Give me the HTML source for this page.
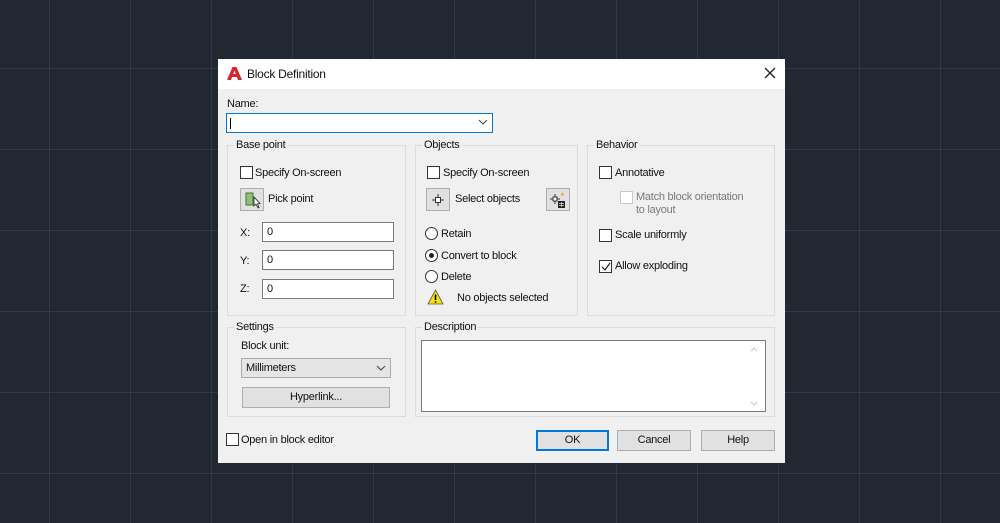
<!DOCTYPE html>
<html><head><meta charset="utf-8"><style>
*{margin:0;padding:0;box-sizing:border-box}
body{width:1000px;height:523px;overflow:hidden;background:#222831;font-family:"Liberation Sans",sans-serif;font-size:11px;letter-spacing:-0.25px;color:#111;position:relative}
.grid{position:absolute;inset:0;background-image:
linear-gradient(to right,rgba(60,68,80,.6) 1px,transparent 1px),
linear-gradient(to bottom,rgba(60,68,80,.6) 1px,transparent 1px);
background-size:81px 81px,81px 81px;background-position:49px 68px,49px 68px}
.dlg{position:absolute;left:218px;top:59px;width:567px;height:404px;background:#f0f0f0}
.title{position:absolute;left:0;top:0;width:567px;height:30px;background:#fff}
.a{position:absolute}
.t{position:absolute;white-space:nowrap;line-height:12px}
.grp{position:absolute;border:1px solid #dcdcdc}
.gl{position:absolute;background:#f0f0f0;padding:0 2px;top:-7px;left:6px;line-height:12px}
.cb{position:absolute;width:13px;height:13px;border:1px solid #333;background:#fff}
.rb{position:absolute;width:13px;height:13px;border:1px solid #333;border-radius:50%;background:#fff}
.inp{position:absolute;background:#fff;border:1px solid #7a7a7a;padding-left:4px;line-height:18px}
.btn{position:absolute;background:#e1e1e1;border:1px solid #adadad;text-align:center;line-height:18px}
</style></head><body>
<div class="grid"></div>
<div class="dlg">
<div class="title">
<svg class="a" style="left:9px;top:7px" width="15" height="15" viewBox="0 0 15 15"><path d="M0 14 L5.5 1 H9.5 L15 14 H11 L9.8 11 H5 L6.2 8 H8.7 L7.5 4.5 L4 14Z" fill="#d8262d"/></svg>
<div class="t" style="left:29px;top:9px;font-size:12px">Block Definition</div>
<svg class="a" style="left:546px;top:8px" width="12" height="12" viewBox="0 0 12 12"><path d="M1 1L11 11M11 1L1 11" stroke="#222" stroke-width="1.3"/></svg>
</div>
<div class="t" style="left:9px;top:39px">Name:</div>
<div class="inp" style="left:8px;top:54px;width:267px;height:20px;border-color:#0078d7"><div class="a" style="left:3px;top:4px;width:1px;height:11px;background:#000"></div></div>
<svg class="a" style="left:260px;top:60px" width="10" height="6"><path d="M1 1L5 5L9 1" stroke="#444" fill="none"/></svg>

<div class="grp" style="left:9px;top:86px;width:179px;height:171px"><div class="gl">Base point</div></div>
<div class="cb" style="left:22px;top:107px"></div><div class="t" style="left:37px;top:108px">Specify On-screen</div>
<div class="btn" style="left:22px;top:129px;width:24px;height:23px"></div>
<svg class="a" style="left:26px;top:132px" width="18" height="18"><rect x="2" y="2" width="7" height="12" fill="#8fc078" stroke="#3a7a2a"/><path d="M10 6 L10 15 L12 13 L14 17 L15 16.5 L13.5 12.8 L16 12.5Z" fill="#fff" stroke="#222" stroke-width=".8"/></svg>
<div class="t" style="left:50px;top:134px">Pick point</div>
<div class="t" style="left:22px;top:168px">X:</div><div class="inp" style="left:44px;top:163px;width:132px;height:20px">0</div>
<div class="t" style="left:22px;top:196px">Y:</div><div class="inp" style="left:44px;top:191px;width:132px;height:20px">0</div>
<div class="t" style="left:22px;top:224px">Z:</div><div class="inp" style="left:44px;top:220px;width:132px;height:20px">0</div>

<div class="grp" style="left:197px;top:86px;width:163px;height:171px"><div class="gl">Objects</div></div>
<div class="cb" style="left:209px;top:107px"></div><div class="t" style="left:225px;top:108px">Specify On-screen</div>
<div class="btn" style="left:208px;top:129px;width:24px;height:23px"></div>
<svg class="a" style="left:212px;top:133px" width="16" height="16"><path d="M8 2V14M2 8H14" stroke="#333"/><rect x="5.5" y="5.5" width="5" height="5" fill="#fff" stroke="#333"/></svg>
<div class="t" style="left:237px;top:134px">Select objects</div>
<div class="btn" style="left:328px;top:129px;width:24px;height:23px"></div>
<svg class="a" style="left:331px;top:132px" width="18" height="18"><path d="M6 3V13M1 8H11" stroke="#333"/><rect x="4" y="6" width="4" height="4" fill="#fff" stroke="#333"/><path d="M13 1L12 5L15 4Z" fill="#e0a020"/><rect x="9" y="10" width="7" height="7" fill="#222"/><path d="M10 12.5H15M10 14.5H15M12.5 11V16" stroke="#ddd" stroke-width=".7"/></svg>
<div class="rb" style="left:207px;top:168px"></div><div class="t" style="left:223px;top:169px">Retain</div>
<div class="rb" style="left:207px;top:190px"><div class="a" style="left:3px;top:3px;width:5px;height:5px;border-radius:50%;background:#222"></div></div><div class="t" style="left:223px;top:191px">Convert to block</div>
<div class="rb" style="left:207px;top:211px"></div><div class="t" style="left:223px;top:212px">Delete</div>
<svg class="a" style="left:209px;top:230px" width="17" height="16"><path d="M8.5 1L16 15H1Z" fill="#f3e21a" stroke="#555" stroke-width=".8"/><path d="M8.5 5.5V11" stroke="#000" stroke-width="1.6"/><circle cx="8.5" cy="13" r=".9"/></svg>
<div class="t" style="left:239px;top:233px">No objects selected</div>

<div class="grp" style="left:369px;top:86px;width:188px;height:171px"><div class="gl">Behavior</div></div>
<div class="cb" style="left:381px;top:107px"></div><div class="t" style="left:397px;top:108px">Annotative</div>
<div class="cb" style="left:402px;top:132px;border-color:#c8c8c8"></div>
<div class="t" style="left:418px;top:132px;color:#7a7a7a">Match block orientation</div>
<div class="t" style="left:418px;top:145px;color:#7a7a7a">to layout</div>
<div class="cb" style="left:381px;top:170px"></div><div class="t" style="left:397px;top:170px">Scale uniformly</div>
<div class="cb" style="left:381px;top:201px"><svg class="a" style="left:1px;top:1px" width="10" height="10"><path d="M1 5L4 8L9 1" stroke="#222" fill="none" stroke-width="1.2"/></svg></div><div class="t" style="left:397px;top:201px">Allow exploding</div>

<div class="grp" style="left:9px;top:268px;width:179px;height:90px"><div class="gl">Settings</div></div>
<div class="t" style="left:23px;top:281px">Block unit:</div>
<div class="a" style="left:23px;top:299px;width:150px;height:20px;background:#e5e5e5;border:1px solid #acacac;padding-left:4px;line-height:18px">Millimeters</div>
<svg class="a" style="left:158px;top:306px" width="10" height="6"><path d="M1 1L5 5L9 1" stroke="#444" fill="none"/></svg>
<div class="btn" style="left:24px;top:328px;width:148px;height:21px">Hyperlink...</div>

<div class="grp" style="left:197px;top:268px;width:360px;height:90px"><div class="gl">Description</div></div>
<div class="a" style="left:203px;top:281px;width:345px;height:72px;background:#fff;border:1px solid #7a7a7a"></div>
<svg class="a" style="left:531px;top:286px" width="10" height="64"><path d="M2 6L5 3L8 6M2 57L5 60L8 57" stroke="#c8c8c8" fill="none"/></svg>

<div class="cb" style="left:8px;top:374px"></div><div class="t" style="left:23px;top:375px">Open in block editor</div>
<div class="btn" style="left:318px;top:371px;width:73px;height:21px;border:2px solid #0078d7;line-height:17px">OK</div>
<div class="btn" style="left:399px;top:371px;width:74px;height:21px">Cancel</div>
<div class="btn" style="left:483px;top:371px;width:74px;height:21px">Help</div>
</div>
</body></html>
